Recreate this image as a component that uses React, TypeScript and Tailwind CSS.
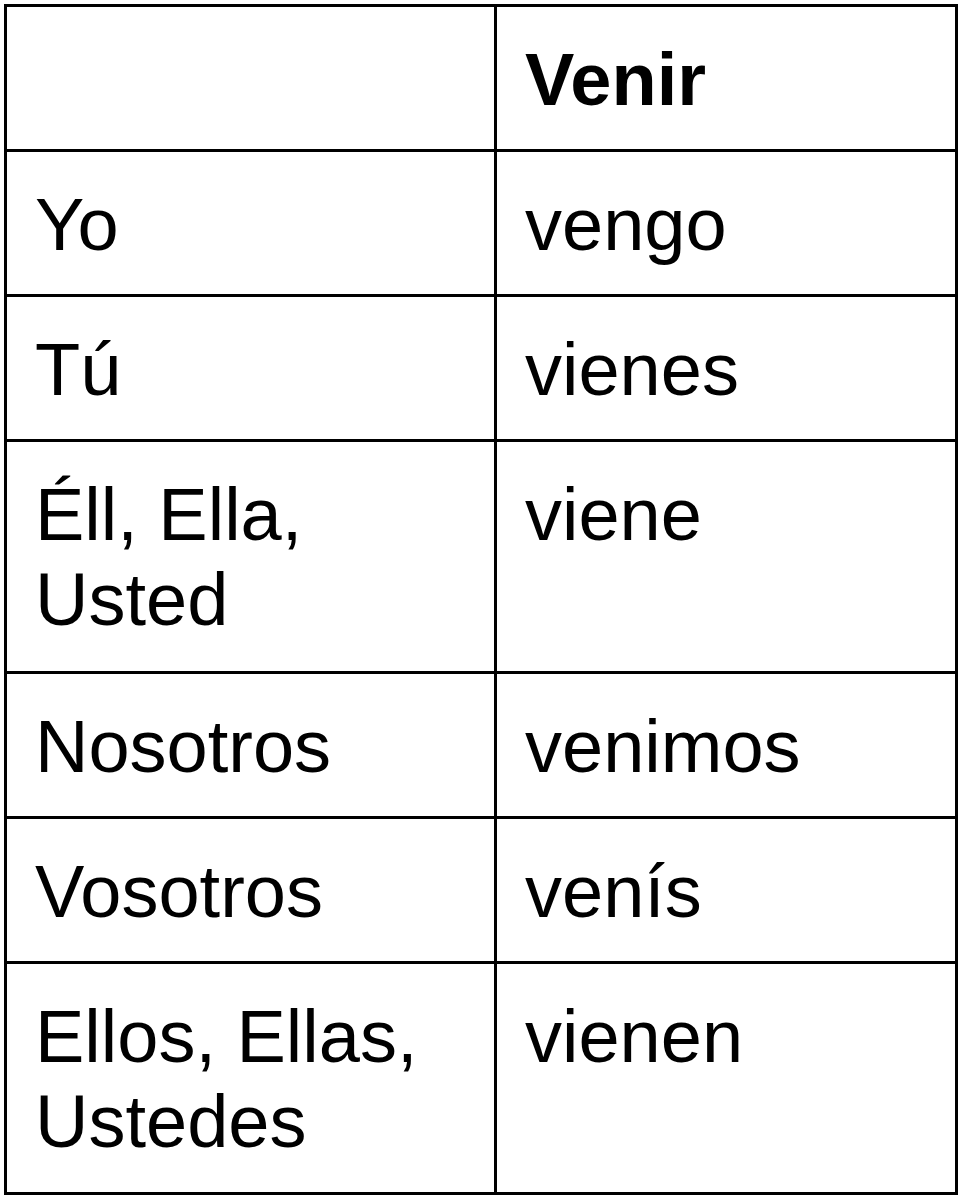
import React from "react";

const rows: [string, string, string][] = [
  ["Yo", "vengo", "pb-[27px]"],
  ["Tú", "vienes", "pb-[27px]"],
  ["Éll, Ella, Usted", "viene", "pb-[29px]"],
  ["Nosotros", "venimos", "pb-[27px]"],
  ["Vosotros", "venís", "pb-[27px]"],
  ["Ellos, Ellas, Ustedes", "vienen", "pb-[28px]"],
];

export default function App() {
  return (
    <div className="min-h-[1200px] w-[964px] bg-white pl-[4px] pt-[4px] font-['Liberation_Sans',Arial,sans-serif] text-black">
      <table className="w-[954px] table-fixed border-collapse border-[3px] border-black text-[74px] leading-[85px]">
        <colgroup>
          <col className="w-[490px]" />
          <col />
        </colgroup>
        <tbody>
          <tr>
            <td className="border-[3px] border-black pb-[27px] pl-[28px] pr-[20px] pt-[30px] align-top"></td>
            <td className="border-[3px] border-black pb-[27px] pl-[28px] pr-[20px] pt-[30px] align-top font-bold">
              Venir
            </td>
          </tr>
          {rows.map(([a, b, pb]) => (
            <tr key={a}>
              <td className={`border-[3px] border-black ${pb} pl-[28px] pr-[20px] pt-[30px] align-top`}>{a}</td>
              <td className={`border-[3px] border-black ${pb} pl-[28px] pr-[20px] pt-[30px] align-top`}>{b}</td>
            </tr>
          ))}
        </tbody>
      </table>
    </div>
  );
}
